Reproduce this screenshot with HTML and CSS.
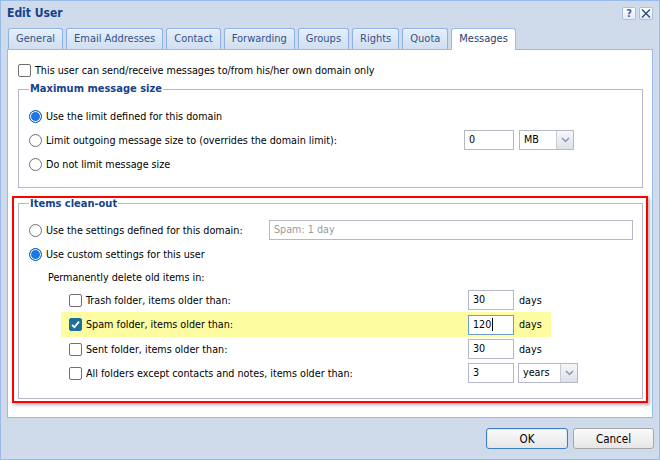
FILE: index.html
```html
<!DOCTYPE html>
<html>
<head>
<meta charset="utf-8">
<link rel="stylesheet" href="styles.css">
</head>
<body>
<div class="window">
  <div class="titlebar">
    <div class="title">Edit User</div>
    <div class="tool tool-help">?</div>
    <div class="tool"><svg width="12" height="11" viewBox="0 0 12 11"><path d="M2 1.5 L10 9.5 M10 1.5 L2 9.5" stroke="#24497f" stroke-width="1.3" fill="none"/></svg></div>
  </div>
  <div class="tabs">
    <div class="tab">General</div>
    <div class="tab">Email Addresses</div>
    <div class="tab">Contact</div>
    <div class="tab">Forwarding</div>
    <div class="tab">Groups</div>
    <div class="tab">Rights</div>
    <div class="tab">Quota</div>
    <div class="tab active">Messages</div>
  </div>
  <div class="panel">
    <div class="row top-check"><span class="cb"></span><span>This user can send/receive messages to/from his/her own domain only</span></div>
    <fieldset class="group g1">
      <legend>Maximum message size</legend>
      <div class="row r24"><span class="radio on"></span><span>Use the limit defined for this domain</span></div>
      <div class="row r24"><span class="radio"></span><span class="lbl lbl-limit">Limit outgoing message size to (overrides the domain limit):</span><div class="field f-size">0</div><div class="select s-mb"><span class="sel-text">MB</span><span class="arrow"><svg width="9" height="6" viewBox="0 0 9 6"><path d="M1 1 L4.5 4.5 L8 1" stroke="#8497b5" stroke-width="1.5" fill="none"/></svg></span></div></div>
      <div class="row r24"><span class="radio"></span><span>Do not limit message size</span></div>
    </fieldset>
    <div class="redbox">
      <fieldset class="group g2">
        <legend>Items clean-out</legend>
        <div class="row r24"><span class="radio"></span><span class="lbl lbl-domain">Use the settings defined for this domain:</span><div class="field disabled f-domain">Spam: 1 day</div></div>
        <div class="row r24"><span class="radio on"></span><span>Use custom settings for this user</span></div>
        <div class="row r22 perm">Permanently delete old items in:</div>
        <div class="row r24 item"><span class="cb"></span><span class="lbl lbl-item">Trash folder, items older than:</span><div class="field f-num">30</div><span class="unit">days</span></div>
        <div class="row r25 item hl"><span class="cb on"><svg width="11" height="11" viewBox="0 0 11 11"><path d="M2 5.8 L4.4 8.2 L9 2.6" stroke="#fff" stroke-width="1.8" fill="none"/></svg></span><span class="lbl lbl-item">Spam folder, items older than:</span><div class="field f-num focus">120<span class="caret"></span></div><span class="unit">days</span></div>
        <div class="row r24 item"><span class="cb"></span><span class="lbl lbl-item">Sent folder, items older than:</span><div class="field f-num">30</div><span class="unit">days</span></div>
        <div class="row r24 item"><span class="cb"></span><span class="lbl lbl-item">All folders except contacts and notes, items older than:</span><div class="field f-num">3</div><div class="select s-years"><span class="sel-text">years</span><span class="arrow"><svg width="9" height="6" viewBox="0 0 9 6"><path d="M1 1 L4.5 4.5 L8 1" stroke="#8497b5" stroke-width="1.5" fill="none"/></svg></span></div></div>
      </fieldset>
    </div>
  </div>
  <div class="footer">
    <button class="btn default">OK</button>
    <button class="btn">Cancel</button>
  </div>
</div>
</body>
</html>
```
FILE: styles.css
```css
* { box-sizing: border-box; }
html, body { margin: 0; padding: 0; }
body {
  width: 660px;
  height: 460px;
  font-family: "DejaVu Sans Condensed", "DejaVu Sans", sans-serif;
  font-size: 10.7px;
  color: #000;
}
.window {
  width: 660px;
  height: 460px;
  border: 1px solid #99bbe8;
  background: #cfdbea;
  display: flex;
  flex-direction: column;
}
.titlebar {
  height: 27px;
  display: flex;
  align-items: flex-start;
  padding: 6px 6px 0 6px;
}
.title {
  flex: 1;
  font-weight: bold;
  color: #15428b;
  font-size: 12px;
  line-height: 12px;
}
.tool {
  width: 14px;
  height: 13px;
  margin-left: 3px;
  border: 1px solid #a9c1e2;
  border-radius: 2px;
  background: linear-gradient(#ffffff, #e2eaf5);
  display: flex;
  align-items: center;
  justify-content: center;
}
.tool-help {
  color: #3d63a5;
  font-weight: bold;
  font-size: 11px;
  line-height: 11px;
}
.tabs {
  height: 21px;
  display: flex;
  align-items: flex-end;
  gap: 3px;
  padding-left: 7px;
}
.tab {
  height: 21px;
  line-height: 20px;
  padding: 0 7px;
  border: 1px solid #8db2e3;
  border-bottom: none;
  border-radius: 3px 3px 0 0;
  background: linear-gradient(#e6eef9, #d0dff2);
  color: #34528a;
  font-size: 11px;
  box-shadow: inset 0 1px 0 #f4f8fd;
}
.tab.active {
  height: 22px;
  margin-bottom: -1px;
  background: #fff;
  position: relative;
  z-index: 1;
  border-color: #99bbe8;
  box-shadow: none;
  color: #233f70;
}
.panel {
  height: 369px;
  margin: 0 6px;
  border: 1px solid #99bbe8;
  background: #fff;
  padding: 10px 4px 0 4px;
}
.row {
  display: flex;
  align-items: center;
}
.top-check {
  height: 20px;
  padding-left: 6px;
}
.r24 { height: 24px; }
.r22 { height: 22px; }
.r25 { height: 25px; }
.group {
  margin: 0;
  border: 1px solid #b5b8c8;
  min-width: 0;
}
.group legend {
  padding: 0 1px;
  font-weight: bold;
  color: #15428b;
  font-size: 11px;
}
.g1 {
  width: 625px;
  margin: 2px 0 0 6px;
  padding: 8px 10px 11px 10px;
}
.g1 legend { line-height: 14px; }
.redbox {
  width: 636px;
  margin-top: 8px;
  border: 2px solid #ff0000;
  padding: 0 3px 2px 4px;
  box-shadow: 2px 2px 3px rgba(0, 0, 0, 0.3);
}
.g2 {
  width: 625px;
  padding: 9px 10px 13px 10px;
}
.g2 legend { line-height: 11px; }
.cb {
  flex: none;
  width: 13px;
  height: 13px;
  border: 1px solid #707070;
  border-radius: 2px;
  background: #fff;
  margin-right: 4px;
  display: flex;
  align-items: center;
  justify-content: center;
}
.cb.on {
  background: #1a6f9f;
  border-color: #1a6f9f;
}
.radio {
  flex: none;
  width: 13px;
  height: 13px;
  border-radius: 50%;
  border: 1px solid #707070;
  background: #fff;
  margin-right: 4px;
}
.radio.on {
  border-color: #0b5cc0;
  background: #1a77e3;
  box-shadow: inset 0 0 0 1px #fff;
}
.lbl { flex: none; }
.lbl-limit { width: 418px; }
.lbl-domain { width: 223px; }
.lbl-item { width: 382px; }
.field {
  flex: none;
  height: 20px;
  border: 1px solid #b5b8c8;
  background: #fff;
  padding-left: 4px;
  line-height: 18px;
  display: flex;
  align-items: center;
}
.field.disabled { color: #9a9a9a; }
.field.focus { border-color: #6f9ccd; }
.caret {
  display: inline-block;
  width: 1px;
  height: 13px;
  background: #000;
  margin-left: 1px;
}
.f-size { width: 50px; margin-right: 5px; }
.f-domain { width: 364px; }
.f-num { width: 46px; margin-right: 5px; }
.unit { flex: none; }
.select {
  flex: none;
  display: flex;
  height: 20px;
  border: 1px solid #b5b8c8;
  background: #fff;
}
.sel-text {
  flex: 1;
  padding-left: 4px;
  line-height: 18px;
}
.arrow {
  width: 17px;
  border-left: 1px solid #c9ccd6;
  background: linear-gradient(#f6f7f9, #dde1e8);
  display: flex;
  align-items: center;
  justify-content: center;
}
.s-mb { width: 55px; }
.s-years { width: 60px; margin-left: -1px; }
.perm { padding-left: 19px; }
.item {
  width: 490px;
  margin-left: 32px;
  padding-left: 8px;
}
.hl { background: #fdfca0; }
.footer {
  display: flex;
  justify-content: flex-end;
  gap: 5px;
  padding: 10px 5px 0 0;
}
.btn {
  width: 82px;
  height: 21px;
  border: 1px solid #a7a7a7;
  border-radius: 3px;
  background: linear-gradient(#fbfbfb, #e6e6e6);
  font-family: "DejaVu Sans Condensed", "DejaVu Sans", sans-serif;
  font-size: 11.5px;
  color: #000;
  padding: 0;
}
.btn + .btn { width: 81px; }
.btn.default {
  border-color: #3c7fc6;
  box-shadow: inset 0 0 0 1px #dbe9f8;
}
```
